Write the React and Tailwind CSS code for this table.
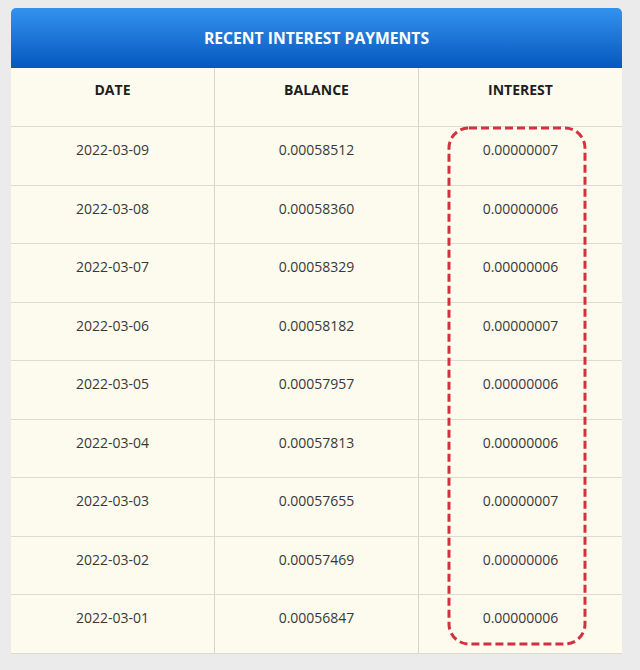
import React from 'react';

// Recent interest payments table
const payments = [
  { date: '2022-03-09', balance: '0.00058512', interest: '0.00000007' },
  { date: '2022-03-08', balance: '0.00058360', interest: '0.00000006' },
  { date: '2022-03-07', balance: '0.00058329', interest: '0.00000006' },
  { date: '2022-03-06', balance: '0.00058182', interest: '0.00000007' },
  { date: '2022-03-05', balance: '0.00057957', interest: '0.00000006' },
  { date: '2022-03-04', balance: '0.00057813', interest: '0.00000006' },
  { date: '2022-03-03', balance: '0.00057655', interest: '0.00000007' },
  { date: '2022-03-02', balance: '0.00057469', interest: '0.00000006' },
  { date: '2022-03-01', balance: '0.00056847', interest: '0.00000006' },
];

export default function App() {
  return (
    <div
      className="w-[640px] h-[670px] bg-[#ebebeb] pt-2 pl-[11px] overflow-hidden"
      style={{ fontFamily: '"Open Sans", "Noto Sans", sans-serif' }}
    >
      <div className="relative w-[611px]">
        {/* Header */}
        <div className="h-[60px] rounded-t-[5px] bg-gradient-to-b from-[#3392ee] to-[#0458bd] flex items-center justify-center pb-[1px]">
          <span className="text-white font-bold text-[15.7px] leading-5">RECENT INTEREST PAYMENTS</span>
        </div>

        {/* Table */}
        <div className="bg-[#fdfbee] border-b border-[#dcdad0]">
          <div className="grid grid-cols-[203px_204px_204px] h-[58px] text-[14px] leading-5 font-bold text-[#1e1e1e]">
            <div className="flex justify-center pt-3">DATE</div>
            <div className="flex justify-center pt-3 border-l border-[#d8d6cc]">BALANCE</div>
            <div className="flex justify-center pt-3 border-l border-[#d8d6cc]">INTEREST</div>
          </div>
          {payments.map((row, index) => (
            <div
              key={index}
              className="grid grid-cols-[203px_204px_204px] h-[58.5px] border-t border-[#dedcd2] text-[14px] leading-5 text-[#383838]"
            >
              <div className="flex justify-center pt-[13px]">{row.date}</div>
              <div className="flex justify-center pt-[13px] border-l border-[#d8d6cc]">{row.balance}</div>
              <div className="flex justify-center pt-[13px] border-l border-[#d8d6cc]">{row.interest}</div>
            </div>
          ))}
        </div>

        {/* Dashed highlight around the interest column */}
        <svg
          className="absolute left-[436px] top-[118px] pointer-events-none"
          width="140"
          height="520"
          viewBox="0 0 140 520"
        >
          <rect
            x="2"
            y="2"
            width="136"
            height="516"
            rx="20"
            fill="none"
            stroke="#d3313f"
            strokeWidth="3"
            strokeDasharray="8 4"
          />
        </svg>
      </div>
    </div>
  );
}
